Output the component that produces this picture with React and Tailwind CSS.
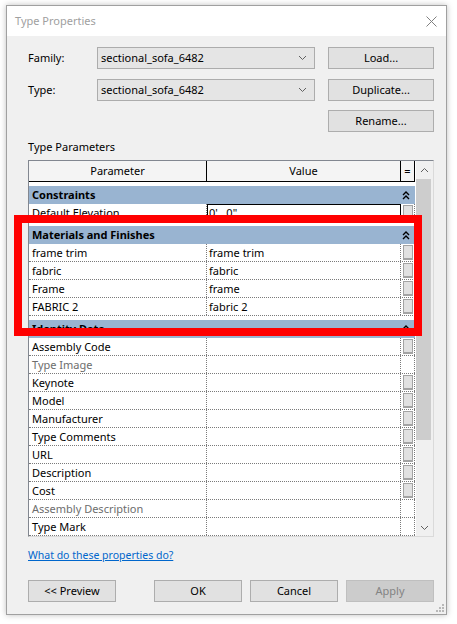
import React from 'react'

const groupRows = [
  {
    title: 'Constraints',
    rows: [{ name: 'Default Elevation', value: "0'   0\"", box: true, editing: true }],
  },
  {
    title: 'Materials and Finishes',
    rows: [
      { name: 'frame trim', value: 'frame trim', box: true },
      { name: 'fabric', value: 'fabric', box: true },
      { name: 'Frame', value: 'frame', box: true },
      { name: 'FABRIC 2', value: 'fabric 2', box: true },
    ],
  },
  {
    title: 'Identity Data',
    rows: [
      { name: 'Assembly Code', box: true },
      { name: 'Type Image', muted: true },
      { name: 'Keynote', box: true },
      { name: 'Model', box: true },
      { name: 'Manufacturer', box: true },
      { name: 'Type Comments', box: true },
      { name: 'URL', box: true },
      { name: 'Description', box: true },
      { name: 'Cost', box: true },
      { name: 'Assembly Description', muted: true },
      { name: 'Type Mark' },
    ],
  },
]

function ChevronDown({ className = '' }) {
  return (
    <svg width="9" height="6" viewBox="0 0 9 6" className={className}>
      <polyline points="1,1 4.5,4.5 8,1" fill="none" stroke="#606060" strokeWidth="1" />
    </svg>
  )
}

function DoubleUp() {
  return (
    <svg width="8" height="9" viewBox="0 0 8 9">
      <polyline points="1,4 4,1 7,4" fill="none" stroke="#000" strokeWidth="1.4" />
      <polyline points="1,8 4,5 7,8" fill="none" stroke="#000" strokeWidth="1.4" />
    </svg>
  )
}

function Button({ children, className = '', disabled }) {
  return (
    <div
      className={`h-[22px] flex items-center justify-center border ${
        disabled ? 'bg-[#cccccc] border-[#bfbfbf] text-[#838383]' : 'bg-[#e1e1e1] border-[#adadad]'
      } ${className}`}
    >
      {children}
    </div>
  )
}

function Combo({ value }) {
  return (
    <div className="w-[218px] h-[22px] bg-[#e5e5e5] border border-[#acacac] flex items-center justify-between pl-[3px] pr-[7px]">
      <span>{value}</span>
      <ChevronDown />
    </div>
  )
}

function Row({ row }) {
  return (
    <div className="flex h-[18px] border-b border-dotted border-[#7a7a7a]">
      <div className={`w-[178px] border-r border-dotted border-[#7a7a7a] pl-[3px] leading-[17px] ${row.muted ? 'text-[#6d6d6d]' : ''}`}>
        {row.name}
      </div>
      {row.editing ? (
        <div className="w-[194px] border border-black pl-[1px] leading-[15px] bg-white whitespace-pre">{row.value}</div>
      ) : (
        <div className="w-[194px] border-r border-dotted border-[#7a7a7a] pl-[2px] leading-[17px]">{row.value}</div>
      )}
      <div className="w-[14px] border-r border-dotted border-[#7a7a7a] flex items-start justify-center pt-[1px]">
        {row.box && <div className="w-[10px] h-[15px] bg-[#e1e1e1] border border-[#a3a3a3] border-b-2" />}
      </div>
    </div>
  )
}

export default function App() {
  return (
    <div className="relative w-[457px] h-[624px] bg-white pl-[6px] pt-[5px] font-['Segoe_UI','Noto_Sans',sans-serif] text-[11px] text-black">
      <div className="w-[441px] h-[610px] border border-[#a0a0a0] bg-[#f0f0f0] shadow-[0_0_6px_rgba(0,0,0,0.25)] flex flex-col">
        {/* Title bar */}
        <div className="h-[30px] bg-white flex items-center justify-between pl-[8px] pr-[9px]">
          <span className="text-[#a0a0a0]">Type Properties</span>
          <svg width="11" height="11" viewBox="0 0 11 11">
            <line x1="0.5" y1="0.5" x2="10.5" y2="10.5" stroke="#808080" strokeWidth="1" />
            <line x1="10.5" y1="0.5" x2="0.5" y2="10.5" stroke="#808080" strokeWidth="1" />
          </svg>
        </div>

        <div className="flex-1 flex flex-col pl-[21px] pr-[12px] pt-[11px]">
          <div className="flex items-center">
            <div className="w-[69px]">Family:</div>
            <Combo value="sectional_sofa_6482" />
            <Button className="w-[106px] ml-[13px]">Load...</Button>
          </div>
          <div className="flex items-center mt-[10px]">
            <div className="w-[69px]">Type:</div>
            <Combo value="sectional_sofa_6482" />
            <Button className="w-[106px] ml-[13px]">Duplicate...</Button>
          </div>
          <div className="flex mt-[9px]">
            <Button className="w-[106px] ml-auto">Rename...</Button>
          </div>

          <div className="mt-[6px] h-[18px] leading-[18px]">Type Parameters</div>

          {/* Parameter grid */}
          <div className="mt-[4px] w-[406px] h-[377px] border border-[#828790] border-r-[#dadada] border-b-[#dadada] bg-white flex overflow-hidden">
            <div className="w-[386px] flex flex-col">
              <div className="flex h-[21px] bg-[#f4f4f4] border-b border-black">
                <div className="w-[178px] border-r border-black flex items-center justify-center">Parameter</div>
                <div className="w-[194px] border-r border-black flex items-center justify-center">Value</div>
                <div className="w-[14px] border-r border-black flex items-center justify-center">=</div>
              </div>
              {groupRows.map(group => (
                <div key={group.title}>
                  <div className="pt-[4px]">
                    <div className="h-[18px] bg-[#99b4d1] flex items-center justify-between pl-[3px] pr-[5px] font-bold">
                      <span>{group.title}</span>
                      <DoubleUp />
                    </div>
                  </div>
                  {group.rows.map(row => (
                    <Row key={row.name} row={row} />
                  ))}
                </div>
              ))}
            </div>
            <div className="w-[1px]" />
            {/* Scrollbar */}
            <div className="w-[17px] bg-[#f0f0f0] flex flex-col">
              <div className="h-[18px] flex items-center justify-center">
                <ChevronDown className="rotate-180" />
              </div>
              <div className="h-[261px] w-[15px] bg-[#cdcdcd]" />
              <div className="flex-1" />
              <div className="h-[17px] flex items-center justify-center">
                <ChevronDown />
              </div>
            </div>
          </div>

          <div className="mt-[9px] h-[18px] leading-[18px] text-[10.5px]">
            <span className="text-[#0066cc] underline">What do these properties do?</span>
          </div>

          <div className="mt-[16px] flex">
            <Button className="w-[88px]">&lt;&lt; Preview</Button>
            <div className="ml-auto flex gap-[8px]">
              <Button className="w-[88px]">OK</Button>
              <Button className="w-[88px]">Cancel</Button>
              <Button className="w-[88px]" disabled>Apply</Button>
            </div>
          </div>

          <div className="flex justify-end mt-auto mb-[2px] mr-[-10px]">
            <svg width="8" height="8" viewBox="0 0 8 8">
              <rect x="6" y="0" width="2" height="2" fill="#b8b8b8" />
              <rect x="3" y="3" width="2" height="2" fill="#b8b8b8" />
              <rect x="6" y="3" width="2" height="2" fill="#b8b8b8" />
              <rect x="0" y="6" width="2" height="2" fill="#b8b8b8" />
              <rect x="3" y="6" width="2" height="2" fill="#b8b8b8" />
              <rect x="6" y="6" width="2" height="2" fill="#b8b8b8" />
            </svg>
          </div>
        </div>
      </div>

      {/* Highlight annotation */}
      <div className="absolute left-[14px] top-[215px] w-[408px] h-[121px] border-[8px] border-[#ff0000]" />
    </div>
  )
}
